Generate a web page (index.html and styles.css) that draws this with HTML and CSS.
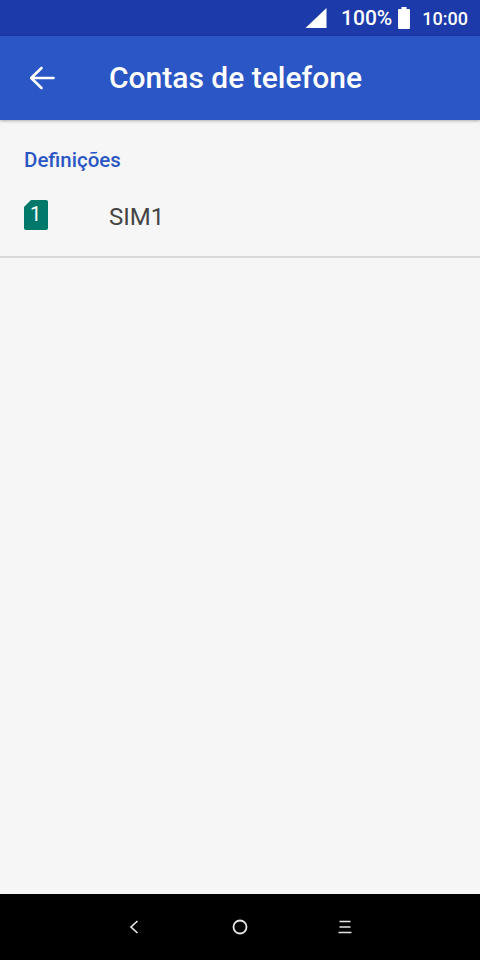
FILE: index.html
```html
<!DOCTYPE html>
<html lang="pt">
<head>
  <meta charset="UTF-8">
  <title>Contas de telefone</title>
  <meta name="viewport" content="width=device-width, initial-scale=1.0">
  <link rel="stylesheet" href="styles.css">
</head>
<body>
  <div class="status-bar">
    <svg class="signal-icon" width="22" height="20" viewBox="0 0 22 20"><path d="M21.5 0V20H0.5Z" fill="#fff"/></svg>
    <span class="battery-text">100%</span>
    <svg class="battery-icon" width="12" height="22" viewBox="0 0 12 22"><path d="M3.5 0H8.5V2H11a1 1 0 0 1 1 1V21a1 1 0 0 1-1 1H1a1 1 0 0 1-1-1V3a1 1 0 0 1 1-1H3.5Z" fill="#fff"/></svg>
    <span class="clock">10:00</span>
  </div>

  <header class="app-bar">
    <svg class="back-icon" width="26" height="24" viewBox="0 0 26 24"><path d="M24.5 12H2.5M12.5 2 2.2 12 12.5 22" fill="none" stroke="#fff" stroke-width="2.6" stroke-linecap="round" stroke-linejoin="round"/></svg>
    <h1>Contas de telefone</h1>
  </header>

  <main class="content">
    <h2 class="section-title">Definições</h2>
    <div class="sim-row">
      <div class="sim-badge">
        <svg width="24" height="30" viewBox="0 0 24 30"><path d="M7 0H22a2 2 0 0 1 2 2V28a2 2 0 0 1-2 2H2a2 2 0 0 1-2-2V7Z" fill="#00796b"/></svg>
        <span class="sim-number">1</span>
      </div>
      <span class="sim-name">SIM1</span>
    </div>
  </main>

  <nav class="nav-bar">
    <svg width="10" height="14" viewBox="0 0 10 14"><path d="M8.5 1 2 7 8.5 13" fill="none" stroke="#e4e4e4" stroke-width="1.7"/></svg>
    <svg class="home-icon" width="16" height="16" viewBox="0 0 16 16"><circle cx="8" cy="8" r="6.5" fill="none" stroke="#e4e4e4" stroke-width="1.8"/></svg>
    <svg width="14" height="14" viewBox="0 0 14 14"><path d="M1.5 1.5H12.5M1.5 7H12.5M0.5 12.5H13.5" fill="none" stroke="#e4e4e4" stroke-width="1.7"/></svg>
  </nav>
</body>
</html>
```

FILE: styles.css
```css
* {
  box-sizing: border-box;
}

html, body {
  height: 100%;
}

body {
  margin: 0;
  display: flex;
  flex-direction: column;
  font-family: Roboto, sans-serif;
  background-color: #f6f6f6;
  overflow: hidden;
}

.status-bar {
  height: 36px;
  flex: none;
  display: flex;
  align-items: center;
  justify-content: flex-end;
  padding-right: 12px;
  background-color: #1c3aa9;
  color: #fff;
}

.signal-icon {
  margin-right: 14px;
}

.battery-text {
  font-size: 21px;
  font-weight: 500;
  margin-right: 6px;
}

.battery-icon {
  margin-right: 12px;
}

.clock {
  font-size: 18px;
  font-weight: 500;
}

.app-bar {
  height: 84px;
  flex: none;
  display: flex;
  align-items: center;
  padding: 0 0 0 29px;
  background-color: #2b56c5;
  box-shadow: 0 1px 3px rgba(0, 0, 0, 0.3);
  position: relative;
}

.app-bar h1 {
  margin: 0 0 2px 54px;
  font-size: 30px;
  font-weight: 500;
  color: #fff;
}

.back-icon {
  flex: none;
}

.content {
  flex: 1;
}

.section-title {
  margin: 0;
  padding: 28px 24px 0;
  font-size: 20.5px;
  line-height: 24px;
  font-weight: 500;
  color: #2b56c5;
}

.sim-row {
  height: 86px;
  display: flex;
  align-items: center;
  padding: 2px 24px 0;
  border-bottom: 2px solid #d9d9d9;
}

.sim-badge {
  position: relative;
  width: 24px;
  height: 30px;
  margin-right: 61px;
}

.sim-badge svg {
  display: block;
}

.sim-number {
  position: absolute;
  top: 3px;
  left: 6px;
  font-size: 20px;
  line-height: 22px;
  color: #fff;
}

.sim-name {
  padding-top: 4px;
  font-size: 24px;
  color: #444;
}

.nav-bar {
  height: 66px;
  flex: none;
  display: flex;
  align-items: center;
  justify-content: center;
  gap: 91px;
  padding-left: 1px;
  background-color: #000;
}

.home-icon {
  margin: 0 -1px 0 2px;
}
```
